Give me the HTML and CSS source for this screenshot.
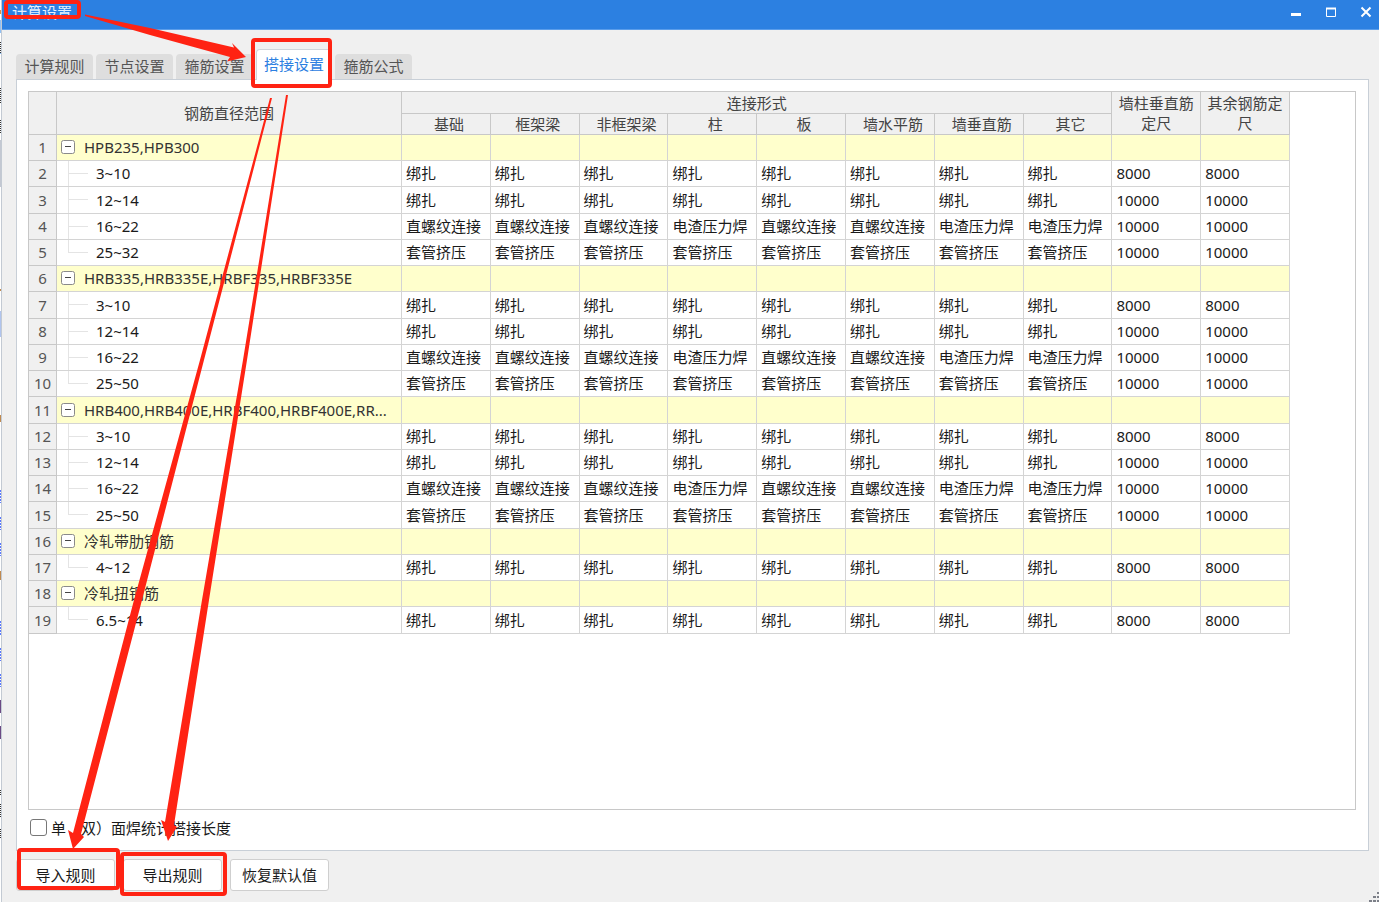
FILE: index.html
```html
<!DOCTYPE html>
<html lang="zh-CN">
<head>
<meta charset="utf-8">
<title>计算设置</title>
<link rel="stylesheet" href="styles.css">
</head>
<body>
<div class="backdrop">
  <svg class="backdrop-art" width="2" height="902" aria-hidden="true">
    <path stroke="#8fc0f5" d="M0.5 20V33M0.5 52V54"/>
    <path stroke="#e08a3c" d="M0.5 10V14"/>
    <path stroke="#333" stroke-dasharray="1 1" d="M0.5 42V54M0.5 88V103M0.5 120V133M0.5 318V330M0.5 790V796M0.5 804V818M0.5 829V838"/>
    <path stroke="#c3c8d2" d="M0.5 140V187"/>
    <path stroke="#b0c4ee" d="M0.5 311V337"/>
    <path stroke="#5a78ff" stroke-dasharray="2 1" d="M0.5 490V503M0.5 517V530M0.5 543V556M0.5 621V635M0.5 648V661M0.5 674V687"/>
    <path stroke="#6b4a84" d="M0.5 700V713M0.5 726V739"/>
    <path stroke="#c08a50" d="M0.5 289V291M0.5 415V422M0.5 571V580"/>
  </svg>
</div>
<div class="window">
  <header class="titlebar">
    <h1 class="title">计算设置</h1>
    <div class="window-controls">
      <button class="control" aria-label="最小化"><svg width="12" height="12"><path d="M1 8.5H11" stroke="#fff" stroke-width="3"/></svg></button>
      <button class="control" aria-label="最大化"><svg width="12" height="12"><path d="M1.5 2V10.5H10.5V2" fill="none" stroke="#fff"/><path d="M1 2.5H11" stroke="#fff" stroke-width="2"/></svg></button>
      <button class="control" aria-label="关闭"><svg width="12" height="12"><path d="M1.5 1.5L10.5 10.5M10.5 1.5L1.5 10.5" stroke="#fff" stroke-width="2"/></svg></button>
    </div>
  </header>
  <nav class="tabs" role="tablist">
    <button class="tab" role="tab">计算规则</button>
    <button class="tab" role="tab">节点设置</button>
    <button class="tab" role="tab">箍筋设置</button>
    <button class="tab tab-active" role="tab" aria-selected="true">搭接设置</button>
    <button class="tab" role="tab">箍筋公式</button>
  </nav>
  <main class="panel">
    <div class="grid-box">
      <table class="grid">
        <colgroup><col class="col-number"><col class="col-name"><col span="10"></colgroup>
        <thead>
          <tr class="head-top">
            <th rowspan="2"></th>
            <th rowspan="2">钢筋直径范围</th>
            <th colspan="8">连接形式</th>
            <th rowspan="2">墙柱垂直筋定尺</th>
            <th rowspan="2">其余钢筋定尺</th>
          </tr>
          <tr class="head-sub">
            <th>基础</th><th>框架梁</th><th>非框架梁</th><th>柱</th><th>板</th><th>墙水平筋</th><th>墙垂直筋</th><th>其它</th>
          </tr>
        </thead>
        <tbody id="rows"></tbody>
      </table>
    </div>
    <label class="option"><input class="checkbox" type="checkbox">单（双）面焊统计搭接长度</label>
  </main>
  <footer class="actions">
    <button class="action">导入规则</button>
    <button class="action">导出规则</button>
    <button class="action">恢复默认值</button>
  </footer>
</div>
<svg class="grip" width="10" height="10" fill="#7d8089" aria-hidden="true">
  <path d="M8 0h2v2h-2zM4 4h3v2h-3zM8 4h2v2h-2zM0 8h3v2h-3zM4 8h3v2h-3zM8 8h2v2h-2z"/>
</svg>
<svg class="annotations" width="1379" height="902" aria-hidden="true">
  <g fill="none" stroke="#ff2313" stroke-width="4">
    <rect x="6" y="2" width="73" height="15" rx="2"/>
    <rect x="253" y="40" width="77" height="46" rx="2"/>
    <rect x="19" y="850" width="99" height="38" rx="2"/>
    <rect x="122" y="854" width="103" height="40" rx="2"/>
  </g>
  <g fill="#ff2313">
    <path d="M85 14.5L150 28L234 47.5L232 43L246 57L227 61.5L230 57L150 35L85 16Z"/>
    <path d="M270 98L272 98L204 360L142 600L81 834L84 837L73 849L68 830L73 833L134 600L200 360Z"/>
    <path d="M286 95L288 95L247 360L209 600L174 825L177 827L168 841L161 820L165 822L202 600L243 360Z"/>
  </g>
</svg>
<script src="rows.js"></script>
</body>
</html>
```
FILE: styles.css
```css
* { box-sizing: border-box; }
body {
  margin: 0;
  height: 100vh;
  display: flex;
  position: relative;
  overflow: hidden;
  background: #f0f0f0;
  color: #1a1a1a;
  font: 15px/20px "Noto Sans", "Noto Sans CJK SC", sans-serif;
}
button { font: inherit; color: inherit; padding: 0; border: 0; }
.backdrop { flex: none; width: 2px; overflow: hidden; background: #fff; border-right: 1px solid #c3cad3; }
.backdrop-art { display: block; }
.window { flex: 1; min-width: 0; display: flex; flex-direction: column; }
.titlebar {
  flex: none;
  height: 30px;
  display: flex;
  justify-content: space-between;
  align-items: center;
  padding: 0 7px 5px 10px;
  background: #2c80e1;
  border-bottom: 1px solid #5b9dea;
}
.title { margin: 0; font-size: 15px; font-weight: 400; line-height: 20px; color: #e6f0fc; }
.window-controls { display: flex; gap: 23px; }
.control { display: flex; width: 12px; height: 12px; background: none; }
.tabs { flex: none; display: flex; align-items: flex-end; gap: 3px; height: 50px; padding: 0 14px; margin-bottom: -1px; z-index: 1; }
.tab {
  height: 25px;
  width: 77px;
  padding-bottom: 2px;
  margin-bottom: 1px;
  background: #dedede;
  color: #555;
  border-radius: 4px 4px 0 0;
}
.tab-active {
  height: 31px;
  width: 76px;
  margin-bottom: 0;
  background: #fff;
  color: #2c80e1;
  border: 1px solid #d0d4d9;
  border-bottom: 0;
}
.panel {
  flex: 1;
  min-height: 0;
  display: flex;
  flex-direction: column;
  margin: 0 10px 0 14px;
  padding: 11px 12px 5px 11px;
  background: #fff;
  border: 1px solid #c8cfd7;
}
.grid-box { flex: 1; min-height: 0; padding-right: 65px; border: 1px solid #c8c8c8; }
.grid { width: 100%; table-layout: fixed; border-spacing: 0; }
.col-number { width: 28px; }
.col-name { width: 345px; }
.grid th, .grid td { border: 0 solid #d4d4d4; border-width: 0 1px 1px 0; white-space: nowrap; overflow: hidden; }
.grid thead th {
  padding: 0 6px;
  line-height: 20px;
  font-weight: 400;
  color: #444;
  background: #f0f0f0;
  border-color: #c8c8c8;
  white-space: normal;
}
.grid .head-sub th { padding: 0 4px 0 10px; }
.head-top { height: 22px; }
.head-sub { height: 21px; }
.grid tbody tr { height: 26px; }
.grid tbody tr:nth-child(4n+3) { height: 27px; }
.grid td { padding: 0 0 1px 4px; }
.grid .number { padding: 0 0 1px; text-align: center; font-weight: 400; color: #555; background: #f0f0f0; border-color: #c8c8c8; }
.group td { background: #ffffcc; color: #333; }
.group-name { display: flex; align-items: center; gap: 9px; }
.toggle { display: flex; width: 14px; height: 14px; background: none; }
.grid .child {
  padding-left: 39px;
  background:
    linear-gradient(#e4e4e4, #e4e4e4) 11px 12px / 20px 1px no-repeat,
    linear-gradient(#e4e4e4, #e4e4e4) 11px 0 / 1px 100% no-repeat;
}
.grid .last {
  background:
    linear-gradient(#e4e4e4, #e4e4e4) 11px 12px / 20px 1px no-repeat,
    linear-gradient(#e4e4e4, #e4e4e4) 11px 0 / 1px 12px no-repeat;
}
.option { flex: none; display: flex; align-items: center; gap: 4px; height: 35px; align-self: flex-start; }
.checkbox { appearance: none; width: 17px; height: 17px; margin: 0 0 0 2px; background: #fff; border: 1px solid #777; border-radius: 3px; }
.actions { flex: none; display: flex; gap: 8px; padding: 8px 14px 11px; }
.action { width: 99px; height: 32px; background: #fff; border: 1px solid #cfcfcf; border-radius: 3px; }
.grip { position: absolute; right: 0; bottom: 0; }
.annotations { position: absolute; left: 0; top: 0; z-index: 2; pointer-events: none; }
```
FILE: rows.js
```js
const groups = [
  ["HPB235,HPB300", ["3~10", "12~14", "16~22", "25~32"]],
  ["HRB335,HRB335E,HRBF335,HRBF335E", ["3~10", "12~14", "16~22", "25~50"]],
  ["HRB400,HRB400E,HRBF400,HRBF400E,RR...", ["3~10", "12~14", "16~22", "25~50"]],
  ["冷轧带肋钢筋", ["4~12"]],
  ["冷轧扭钢筋", ["6.5~14"]]
];
const tie = Array(8).fill("绑扎");
const thread = "直螺纹连接";
const weld = "电渣压力焊";
const values = [
  [...tie, "8000", "8000"],
  [...tie, "10000", "10000"],
  [thread, thread, thread, weld, thread, thread, weld, weld, "10000", "10000"],
  [...Array(8).fill("套管挤压"), "10000", "10000"]
];
const toggle = '<button class="toggle" aria-label="折叠"><svg width="14" height="14">' +
  '<rect x="0.5" y="0.5" width="13" height="13" rx="2" fill="#fff" stroke="#8a8a8a"/>' +
  '<path d="M4 6.5H10" stroke="#444"/></svg></button>';
let number = 0;
let html = "";
const cells = list => list.map(text => `<td>${text}</td>`).join("");
for (const [name, ranges] of groups) {
  html += `<tr class="group"><th class="number">${++number}</th>` +
    `<td><div class="group-name">${toggle}<span>${name}</span></div></td>${cells(Array(10).fill(""))}</tr>`;
  ranges.forEach((range, i) => {
    const last = i === ranges.length - 1 ? " last" : "";
    html += `<tr><th class="number">${++number}</th><td class="child${last}">${range}</td>${cells(values[i])}</tr>`;
  });
}
document.getElementById("rows").innerHTML = html;
```
